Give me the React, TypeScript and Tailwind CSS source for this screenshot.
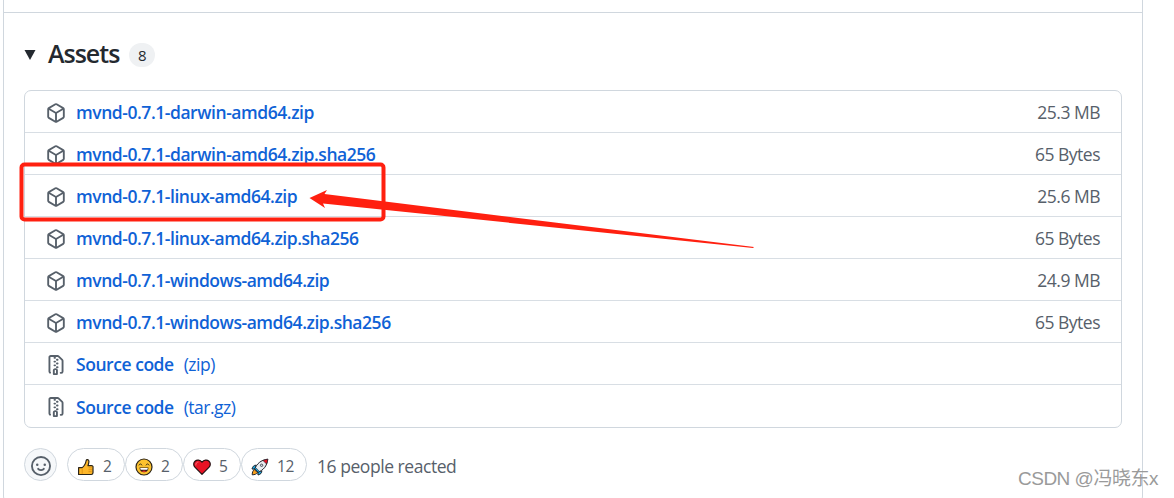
import { clsx } from "clsx";

interface IAsset {
  name: string;
  size?: string;
  format?: string;
}

const assets: IAsset[] = [
  { name: "mvnd-0.7.1-darwin-amd64.zip", size: "25.3 MB" },
  { name: "mvnd-0.7.1-darwin-amd64.zip.sha256", size: "65 Bytes" },
  { name: "mvnd-0.7.1-linux-amd64.zip", size: "25.6 MB" },
  { name: "mvnd-0.7.1-linux-amd64.zip.sha256", size: "65 Bytes" },
  { name: "mvnd-0.7.1-windows-amd64.zip", size: "24.9 MB" },
  { name: "mvnd-0.7.1-windows-amd64.zip.sha256", size: "65 Bytes" },
  { name: "Source code", format: "(zip)" },
  { name: "Source code", format: "(tar.gz)" },
];

function PackageIcon() {
  return (
    <svg viewBox="0 0 16 16" className="mt-px size-5 shrink-0 fill-[#57606a]">
      <path d="m8.878.392 5.25 3.045c.54.314.872.89.872 1.514v6.098a1.75 1.75 0 0 1-.872 1.514l-5.25 3.045a1.75 1.75 0 0 1-1.756 0l-5.25-3.045A1.75 1.75 0 0 1 1 11.049V4.951c0-.624.332-1.201.872-1.514L7.122.392a1.75 1.75 0 0 1 1.756 0ZM7.875 1.69l-4.63 2.685L8 7.133l4.755-2.758-4.63-2.685a.248.248 0 0 0-.25 0ZM2.5 5.677v5.372c0 .09.047.171.125.216l4.625 2.683V8.432Zm6.25 8.271 4.625-2.683a.25.25 0 0 0 .125-.216V5.677L8.75 8.432Z" />
    </svg>
  );
}

function FileZipIcon() {
  return (
    <svg viewBox="0 0 16 16" className="mt-px size-5 shrink-0 fill-[#57606a]">
      <path d="M3.5 1.75v11.5c0 .09.048.173.126.217a.75.75 0 0 1-.752 1.298A1.748 1.748 0 0 1 2 13.25V1.75C2 .784 2.784 0 3.75 0h5.586c.464 0 .909.185 1.237.513l2.914 2.914c.329.328.513.773.513 1.237v8.586A1.75 1.75 0 0 1 12.25 15h-.5a.75.75 0 0 1 0-1.5h.5a.25.25 0 0 0 .25-.25V4.664a.25.25 0 0 0-.073-.177L9.513 1.573a.25.25 0 0 0-.177-.073H7.25a.75.75 0 0 1 0 1.5h-.5a.75.75 0 0 1 0-1.5h-3a.25.25 0 0 0-.25.25Zm3.75 8.75h.5c.966 0 1.75.784 1.75 1.75v3a.75.75 0 0 1-.75.75h-2.5a.75.75 0 0 1-.75-.75v-3c0-.966.784-1.75 1.75-1.75ZM6 5.25a.75.75 0 0 1 .75-.75h.5a.75.75 0 0 1 0 1.5h-.5A.75.75 0 0 1 6 5.25Zm.75 2.25h.5a.75.75 0 0 1 0 1.5h-.5a.75.75 0 0 1 0-1.5ZM8 6.75A.75.75 0 0 1 8.75 6h.5a.75.75 0 0 1 0 1.5h-.5A.75.75 0 0 1 8 6.75ZM8.75 3h.5a.75.75 0 0 1 0 1.5h-.5a.75.75 0 0 1 0-1.5ZM8 9.75A.75.75 0 0 1 8.75 9h.5a.75.75 0 0 1 0 1.5h-.5A.75.75 0 0 1 8 9.75Zm-1 2.5v2.25h1v-2.25a.25.25 0 0 0-.25-.25h-.5a.25.25 0 0 0-.25.25Z" />
    </svg>
  );
}

function SmileyIcon() {
  return (
    <svg viewBox="0 0 16 16" className="mt-0.5 size-5 fill-[#57606a]">
      <path d="M8 0a8 8 0 1 1 0 16A8 8 0 0 1 8 0ZM1.5 8a6.5 6.5 0 1 0 13 0 6.5 6.5 0 0 0-13 0Zm3.82 1.636a.75.75 0 0 1 1.038.175l.007.009c.103.118.22.222.35.31.264.178.683.37 1.285.37.602 0 1.02-.192 1.285-.371.13-.088.247-.192.35-.31l.007-.008a.75.75 0 0 1 1.222.87c-.06.08-.13.17-.203.244-.16.166-.338.316-.53.445-.63.418-1.37.638-2.127.629-.946 0-1.652-.308-2.126-.63a3.331 3.331 0 0 1-.715-.657.75.75 0 0 1 .163-1.074ZM12 7a1 1 0 1 1-2 0 1 1 0 0 1 2 0ZM5 8a1 1 0 1 1 0-2 1 1 0 0 1 0 2Z" />
    </svg>
  );
}

function ThumbIcon() {
  return (
    <svg viewBox="0 0 18 18" className="size-[18px]" strokeLinejoin="round">
      <path d="M1.600 9.700H5c2.300-1.500 3.600-4 4.200-7.200.3-1.400 2.600-1.200 2.700.7 0 1.700-.4 3.100-.9 4.500h3.500c1.300 0 1.800.9 1.500 1.800v5.300c0 .9-.6 1.700-1.800 1.700H1.600z" fill="#fdb72a" stroke="#2b2418" strokeWidth="1.200" />
      <path d="M5.200 11v4.800M11.500 9.800h3.700M11.500 11.700h3.500M11.500 13.700h3.200" fill="none" stroke="#d98a10" strokeWidth=".8" />
    </svg>
  );
}

function LaughIcon() {
  return (
    <svg viewBox="0 0 18 18" className="size-[18px]" fill="none">
      <circle cx="9" cy="9" r="8" fill="#fdc22f" stroke="#2b2418" strokeWidth="1.200" />
      <path d="M4 7c.6-1.500 2.300-1.500 2.900 0M11.100 7c.6-1.500 2.300-1.500 2.900 0" stroke="#2b2418" strokeWidth=".9" strokeLinecap="round" />
      <path d="M4.500 9.500h9c0 3-1.800 4.800-4.500 4.800s-4.500-1.800-4.500-4.800z" fill="#2b1a14" />
      <path d="M5.200 10h7.600l-.4 1.700H5.600z" fill="#fff" />
      <path d="M6.500 13.300c1.200-1.200 3.800-1.200 5 0-1.300.9-3.700.9-5 0z" fill="#e8362e" />
    </svg>
  );
}

function HeartIcon() {
  return (
    <svg viewBox="0 0 18 18" className="size-[18px]">
      <path d="M9 16.300 1.900 9.200C.2 7.300.4 4.600 2 3.200c2-1.700 5-1.400 7 1 2-2.400 5-2.700 7-1 1.600 1.400 1.800 4.100.1 6z" fill="#e81224" stroke="#241012" strokeWidth="1.200" strokeLinejoin="round" />
      <path d="M2.800 7c-.2-1.500.7-2.800 2.200-2.900" stroke="#f5727d" strokeWidth=".9" fill="none" strokeLinecap="round" />
    </svg>
  );
}

function RocketIcon() {
  return (
    <svg viewBox="0 0 18 18" className="size-[18px]" stroke="#20242c" strokeLinejoin="round">
      <path d="M5.200 7.200C3 7 1.500 8.600 1 11l3 .2zM10.800 12.800c.2 2.200-1.400 3.700-3.800 4.200l-.2-3z" fill="#1aa5de" strokeWidth="1" />
      <path d="M3.400 11.600c-1.500.8-2.200 2.700-2.200 5.200 2.500 0 4.400-.7 5.200-2.200z" fill="#f9a01b" strokeWidth="1" />
      <path d="M3.800 10.800C5.800 6 9.500 2 16.800 1.200 16 8.500 12 12.200 7.200 14.200z" fill="#e9edf1" strokeWidth="1" />
      <path d="M12 2.500c1.500-.7 3-1.100 4.800-1.300-.2 1.800-.6 3.300-1.300 4.800z" fill="#e81224" strokeWidth=".6" />
      <path d="m3.800 10.800 3.400 3.400 1.400-.7-4.100-4.100z" fill="#1aa5de" strokeWidth=".6" />
      <circle cx="10.600" cy="7.300" r="1.200" fill="#d3dae0" strokeWidth=".7" />
    </svg>
  );
}

const reactions = [
  { icon: <ThumbIcon />, count: 2, width: "w-[58px]" },
  { icon: <LaughIcon />, count: 2, width: "w-[58px]" },
  { icon: <HeartIcon />, count: 5, width: "w-[58px]" },
  { icon: <RocketIcon />, count: 12, width: "w-[66px]" },
];

function AssetRow({ asset }: { asset: IAsset }) {
  return (
    <li className="flex h-[42px] items-center border-b border-[#d8dee4] pt-px pr-[21px] pl-[21px] last:border-b-0">
      {asset.format ? <FileZipIcon /> : <PackageIcon />}
      <a className="ml-2.5 text-[17.5px] leading-6 font-[560] tracking-[-0.45px] text-[#0f62d6]">{asset.name}</a>
      {asset.format && <span className="ml-2.5 text-[17.5px] leading-6 tracking-[-0.5px] text-[#0f62d6]">{asset.format}</span>}
      <span className="ml-auto text-[17.5px] leading-6 tracking-[-0.5px] text-[#57606a]">{asset.size}</span>
    </li>
  );
}

export default function App() {
  return (
    <div className="relative h-[498px] w-[1174px] overflow-hidden bg-white font-['Open_Sans','Noto_Sans',sans-serif]">
      <div className="ml-[3px] h-[503px] w-[1140px] rounded-b-[7px] border border-t-0 border-[#d0d7de]">
        <div className="h-[13px] border-b border-[#d0d7de]" />
        <div className="px-5">
          <div className="flex h-[77px] items-center pt-0.5">
            <svg viewBox="0 0 12 10" className="mt-1 h-2.5 w-3 fill-[#24292f]">
              <path d="M.5 0h11L6 10z" />
            </svg>
            <h3 className="ml-3 text-[25px] leading-8 font-[550] tracking-[-1px] text-[#24292f]">Assets</h3>
            <span className="mt-1 ml-2.5 flex h-6 w-[26px] items-center justify-center rounded-full bg-[#eff1f3] pt-0.5 text-[15px] font-medium text-[#24292f]">8</span>
          </div>
          <ul className="rounded-[7px] border border-[#d0d7de]">
            {assets.map((asset) => (
              <AssetRow key={asset.name + (asset.format ?? "")} asset={asset} />
            ))}
          </ul>
          <div className="mt-5 flex items-center">
            <button className="flex size-[33px] items-center justify-center rounded-full border border-[#d0d7de] bg-[#f6f8fa]">
              <SmileyIcon />
            </button>
            <div className="ml-2.5 flex">
              {reactions.map((reaction, i) => (
                <button key={i} className={clsx("flex h-[33px] items-center rounded-full border border-[#d0d7de] pt-1 pl-[9px] text-[15.5px] tracking-[-0.3px] text-[#57606a]", reaction.width)}>
                  {reaction.icon}
                  <span className="ml-2">{reaction.count}</span>
                </button>
              ))}
            </div>
            <span className="ml-2.5 pt-[3px] text-[17.5px] tracking-[-0.45px] text-[#57606a]">16 people reacted</span>
          </div>
        </div>
      </div>

      <svg viewBox="0 0 1174 498" className="pointer-events-none absolute inset-0 h-[498px] w-[1174px]">
        <rect x="21.500" y="164.500" width="362" height="55" rx="3" fill="none" stroke="#ff2010" strokeWidth="4" />
        <path d="M309.500 198 327 190 324.500 194 754 247 753 248 323 203.500 325 208z" fill="#ff2010" />
      </svg>
      <span className="absolute top-[465px] left-[1018px] font-['Liberation_Sans','Noto_Sans_CJK_SC',sans-serif] text-[19px] leading-7 tracking-[-0.5px] whitespace-nowrap text-[#9a9a9a]">CSDN @冯晓东x</span>
    </div>
  );
}
